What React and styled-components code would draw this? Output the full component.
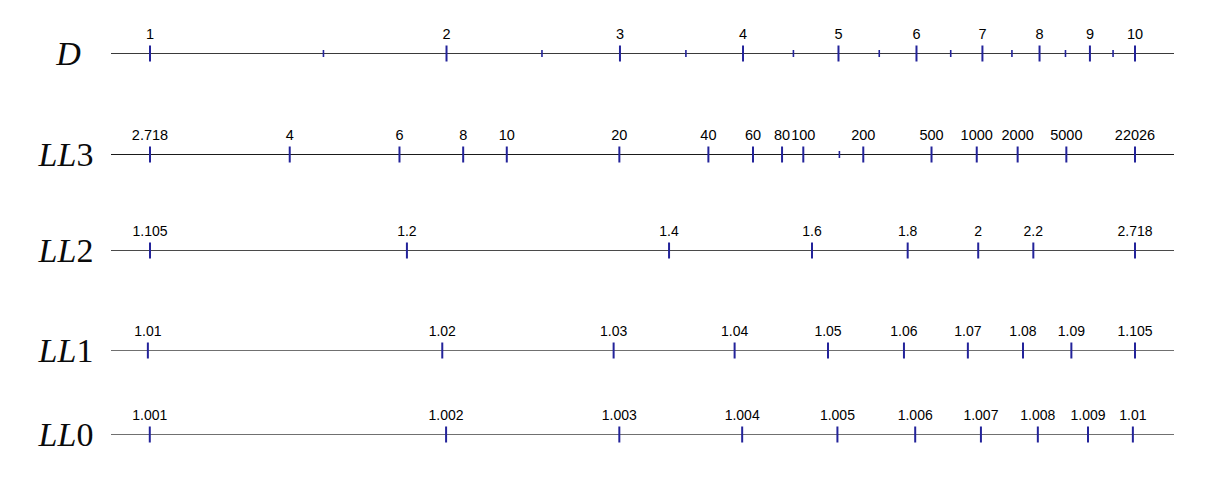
import styled, { createGlobalStyle } from 'styled-components';

const GlobalStyle = createGlobalStyle`
  html, body {
    margin: 0;
    padding: 0;
    background: #ffffff;
  }
`;

const Figure = styled.div`
  width: 1213px;
  height: 486px;
  padding-top: 13px;
  box-sizing: border-box;
  display: flex;
  flex-direction: column;
  background: #fff;
  overflow: hidden;
`;

const Row = styled.div`
  display: grid;
  grid-template-columns: 110px 1fr;
  align-items: start;
  height: ${({ $height }) => $height}px;
  flex-shrink: 0;
`;

const ScaleName = styled.div`
  height: 81px;
  padding-left: ${({ $shift }) => 22 + $shift}px;
  display: flex;
  align-items: center;
  justify-content: center;
  font-family: 'Liberation Serif', 'Times New Roman', serif;
  font-size: 34px;
  line-height: 1;
  color: #0a0a0a;
  white-space: nowrap;
`;

const Letter = styled.i`
  font-style: italic;
`;

const Track = styled.svg`
  display: block;
  width: 1103px;
  height: 81px;
  overflow: visible;
`;

const TickLabel = styled.text`
  font-family: 'Liberation Sans', Arial, sans-serif;
  font-size: ${({ $size }) => $size}px;
  fill: #000;
  text-anchor: middle;
`;

const LINE_Y = 40.5;
const ORIGIN = 40;
const LENGTH = 985;

const E = Math.E;
const log10 = Math.log10;

const scales = [
  {
    name: ['D'],
    shift: 5,
    height: 101,
    line: '#3a3a3a',
    size: 14.5,
    pos: (v) => log10(v),
    majors: [1, 2, 3, 4, 5, 6, 7, 8, 9, 10].map((v) => [v, String(v)]),
    minors: [1.5, 2.5, 3.5, 4.5, 5.5, 6.5, 7.5, 8.5, 9.5],
  },
  {
    name: ['L', 'L', '3'],
    shift: 0,
    height: 96,
    line: '#1a1a1a',
    size: 14.5,
    pos: (v) => log10(Math.log(v)),
    majors: [
      [E, '2.718'], [4, '4'], [6, '6'], [8, '8'], [10, '10'], [20, '20'], [40, '40'],
      [60, '60'], [80, '80'], [100, '100'], [200, '200'], [500, '500'], [1000, '1000'],
      [2000, '2000'], [5000, '5000'], [Math.exp(10), '22026'],
    ],
    minors: [150],
  },
  {
    name: ['L', 'L', '2'],
    shift: 0,
    height: 100,
    line: '#4a4a4a',
    size: 14,
    pos: (v) => log10(10 * Math.log(v)),
    majors: [
      [Math.exp(0.1), '1.105'], [1.2, '1.2'], [1.4, '1.4'], [1.6, '1.6'],
      [1.8, '1.8'], [2, '2'], [2.2, '2.2'], [E, '2.718'],
    ],
    minors: [],
  },
  {
    name: ['L', 'L', '1'],
    shift: 0,
    height: 84,
    line: '#707070',
    size: 14,
    pos: (v) => log10(100 * Math.log(v)),
    majors: [
      [1.01, '1.01'], [1.02, '1.02'], [1.03, '1.03'], [1.04, '1.04'], [1.05, '1.05'],
      [1.06, '1.06'], [1.07, '1.07'], [1.08, '1.08'], [1.09, '1.09'], [Math.exp(0.1), '1.105'],
    ],
    minors: [],
  },
  {
    name: ['L', 'L', '0'],
    shift: 0,
    height: 80,
    line: '#707070',
    size: 14,
    pos: (v) => log10(1000 * Math.log(v)),
    majors: [
      [1.001, '1.001'], [1.002, '1.002'], [1.003, '1.003'], [1.004, '1.004'], [1.005, '1.005'],
      [1.006, '1.006'], [1.007, '1.007'], [1.008, '1.008'], [1.009, '1.009'], [1.01, '1.01'],
    ],
    minors: [],
  },
];

const TICK = '#23239a';

const Scale = ({ scale }) => {
  const x = (v) => ORIGIN + scale.pos(v) * LENGTH;
  return (
    <Track viewBox="0 0 1103 81">
      <line x1="1" x2="1064" y1={LINE_Y} y2={LINE_Y} stroke={scale.line} strokeWidth="1.2" />
      {scale.minors.map((v) => (
        <line key={'m' + v} x1={x(v)} x2={x(v)} y1={LINE_Y - 3.5} y2={LINE_Y + 3.5} stroke={TICK} strokeWidth="1.6" />
      ))}
      {scale.majors.map(([v, label]) => (
        <g key={label}>
          <line x1={x(v)} x2={x(v)} y1={LINE_Y - 8} y2={LINE_Y + 8} stroke={TICK} strokeWidth="2" />
          <TickLabel x={x(v)} y={LINE_Y - 14.5} $size={scale.size}>{label}</TickLabel>
        </g>
      ))}
    </Track>
  );
};

const App = () => (
  <>
    <GlobalStyle />
    <Figure>
      {scales.map((scale) => (
        <Row key={scale.name.join('')} $height={scale.height}>
          <ScaleName $shift={scale.shift}>
            {scale.name.map((c, i) => (/[A-Z]/.test(c) ? <Letter key={i}>{c}</Letter> : <span key={i}>{c}</span>))}
          </ScaleName>
          <Scale scale={scale} />
        </Row>
      ))}
    </Figure>
  </>
);

export default App;
